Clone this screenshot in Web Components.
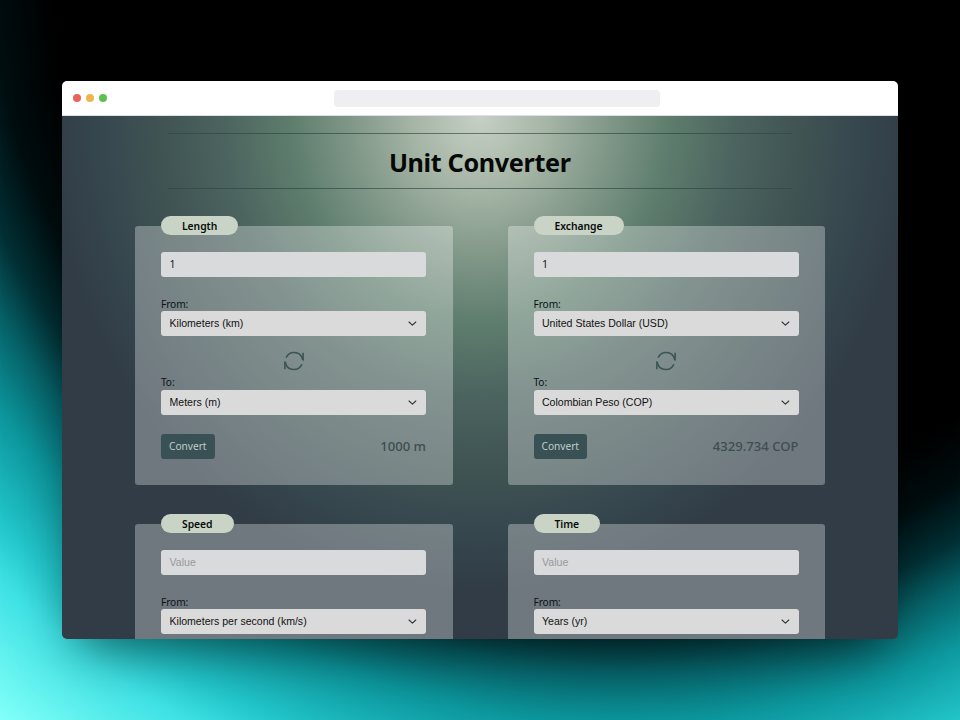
<!DOCTYPE html>
<html lang="en">
<head>
<meta charset="utf-8">
<title>Unit Converter</title>
<style>
html,body{margin:0;height:100%}
body{width:960px;height:720px;overflow:hidden}
</style>
</head>
<body>
<app-stage></app-stage>
<script>
const define = (name, html) => customElements.define(name, class extends HTMLElement {
  constructor() {
    super();
    const t = document.createElement('template');
    t.innerHTML = html;
    this.attachShadow({mode: 'open'}).append(t.content.cloneNode(true));
  }
});

define('value-field', `<style>
:host{display:flex;align-items:center;box-sizing:border-box;height:25px;padding:0 9px 0 8.5px;border-radius:3px;background:#d9dadb;font:10.6px/25px "Liberation Sans",Arial,sans-serif;color:#17191a}
:host([number]){font:10.5px/25px "Noto Sans",sans-serif}
:host([empty]){color:#97999b}
</style><slot></slot>`);

define('unit-select', `<style>
:host{display:block;color:#0c1214;font:10.2px/14px "Noto Sans",sans-serif}
.label{height:14.8px;letter-spacing:-.1px}
.box{display:flex;align-items:center;justify-content:space-between;box-sizing:border-box;height:25px;padding:0 9px 0 8.5px;border-radius:3px;background:#dadada;font:10.55px/25px "Liberation Sans",Arial,sans-serif;color:#111}
svg{width:9px;height:9px}
</style><div class="label"><slot name="label"></slot></div><div class="box"><slot></slot><svg viewBox="0 0 9 9" fill="none" stroke="#303638" stroke-width="1.1" stroke-linecap="round" stroke-linejoin="round"><path d="M1 3l3.4 3.2L7.8 3"/></svg></div>`);

define('swap-icon', `<style>
:host{display:flex;justify-content:center;height:20px}
svg{width:20px;height:20px}
</style><svg viewBox="0 0 20 20" fill="none" stroke="#3c5454" stroke-width="1.6"><path d="M2.1 6.8A8.7 8.7 0 0 1 18.4 7.6"/><path d="M17.9 13.2A8.7 8.7 0 0 1 1.6 12.4"/><path d="M19.1 1.8v7.8M.9 18.2v-7.8"/><path d="M19.8 9.8l-2.2-1.4.6-2.2zM.2 10.2l2.2 1.4-.6 2.2z" fill="#3c5454" stroke="none"/></svg>`);

define('convert-button', `<style>
:host{display:block;height:25px;width:53.5px;border-radius:3px;background:#395154;color:#bfcdca;text-align:center;font:10.2px/25px "Noto Sans",sans-serif;letter-spacing:-.05px}
</style><slot></slot>`);

define('converter-card', `<style>
:host{display:flex;flex-direction:column;box-sizing:border-box;width:317.5px;height:259.5px;padding:0 26.5px 26px 26px;border-radius:3px;background:rgba(255,255,255,.31)}
.pill{align-self:flex-start;height:19px;margin-top:-9.5px;padding:0 21px;border-radius:10px;background:#c9d4c6;color:#080b0a;font:600 10.35px/20px "Noto Sans",sans-serif;letter-spacing:-.04px;white-space:nowrap}
.value{margin-top:17px;display:block}
.from{margin-top:19.7px;display:block}
.swap{margin-top:14.2px;display:block}
.to{margin-top:4.6px;display:block}
.foot{margin-top:19px;display:flex;justify-content:space-between;align-items:center}
:host([pending]) .foot{display:none}
.result{color:#3d4e50;font:500 13.1px/25px "Noto Sans",sans-serif}
</style><div class="pill"><slot name="title"></slot></div><div class="value"><slot name="value"></slot></div><div class="from"><slot name="from"></slot></div><div class="swap"><swap-icon></swap-icon></div><div class="to"><slot name="to"></slot></div><div class="foot"><slot name="action"></slot><div class="result"><slot name="result"></slot></div></div>`);

define('title-bar', `<style>
:host{display:grid;grid-template-columns:1fr 326px 1fr;align-items:center;height:35px;box-sizing:border-box;padding:0 11px;background:#fff;border-bottom:.5px solid #dde}
.dots{display:flex;gap:4.5px}
i{width:8.5px;height:8.5px;border-radius:50%}
.address{height:17px;border-radius:4px;background:#efeff1;margin-left:17px;width:326px}
</style><div class="dots"><i style="background:#e9625c"></i><i style="background:#f0b44a"></i><i style="background:#5cc24f"></i></div><div class="address"></div>`);

define('page-heading', `<style>
:host{display:block;width:624px;margin:0 auto}
.rule{height:1px;background:linear-gradient(90deg,rgba(40,66,62,.5),rgba(40,66,62,.62) 15% 85%,rgba(40,66,62,.5))}
h1{margin:0;height:54px;text-align:center;color:#060807;font:700 25.2px/56px "Noto Sans",sans-serif;letter-spacing:-.35px}
</style><div class="rule"></div><h1><slot></slot></h1><div class="rule"></div>`);

define('browser-window', `<style>
:host{display:flex;flex-direction:column;width:836.5px;height:558px;border-radius:5px;overflow:hidden;box-shadow:0 22px 50px -14px rgba(0,0,0,.55)}
.page{flex:1;min-height:0;overflow:hidden;box-sizing:border-box;padding-top:17px;background:radial-gradient(592px 650px at 50% 0,#c6d0c4 0%,#a3b3a4 12%,#83998a 21%,#5f7e6e 31.5%,#4c645f 43%,#405453 54%,#36474e 64%,#313c46 73%)}
</style><title-bar></title-bar><div class="page"><slot></slot></div>`);

define('card-grid', `<style>
:host{display:grid;grid-template-columns:317.5px 317.5px;column-gap:55px;row-gap:38.5px;padding:36.5px 0 0 73.5px}
</style><slot></slot>`);

define('app-stage', `<style>
:host{display:block;box-sizing:border-box;width:960px;height:720px;padding:81px 0 0 61.5px;background:radial-gradient(circle at 620px -50px,#000 570px,#000d0f 630px,#023035 680px,#066268 720px,#0c969c 772px,#22c6cb 842px,#40e2e5 885px,#80fff8 985px)}
</style>
<browser-window>
<page-heading>Unit Converter</page-heading>
<card-grid>
<converter-card><span slot="title">Length</span><value-field slot="value" number>1</value-field><unit-select slot="from"><span slot="label">From:</span>Kilometers (km)</unit-select><unit-select slot="to"><span slot="label">To:</span>Meters (m)</unit-select><convert-button slot="action">Convert</convert-button><span slot="result">1000 m</span></converter-card>
<converter-card><span slot="title">Exchange</span><value-field slot="value" number>1</value-field><unit-select slot="from"><span slot="label">From:</span>United States Dollar (USD)</unit-select><unit-select slot="to"><span slot="label">To:</span>Colombian Peso (COP)</unit-select><convert-button slot="action">Convert</convert-button><span slot="result">4329.734 COP</span></converter-card>
<converter-card pending><span slot="title">Speed</span><value-field slot="value" empty>Value</value-field><unit-select slot="from"><span slot="label">From:</span>Kilometers per second (km/s)</unit-select></converter-card>
<converter-card pending><span slot="title">Time</span><value-field slot="value" empty>Value</value-field><unit-select slot="from"><span slot="label">From:</span>Years (yr)</unit-select></converter-card>
</card-grid>
</browser-window>`);
</script>
</body>
</html>
